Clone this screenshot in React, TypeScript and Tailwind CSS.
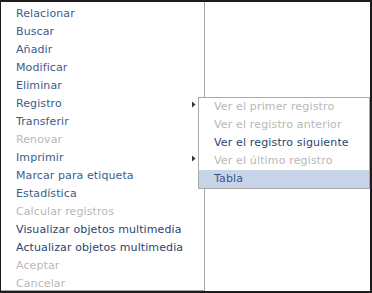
import React from "react";

type Item = { label: string; disabled?: boolean; dark?: boolean; sub?: boolean };

const mainItems: Item[] = [
  { label: "Relacionar" },
  { label: "Buscar" },
  { label: "Añadir" },
  { label: "Modificar" },
  { label: "Eliminar" },
  { label: "Registro", sub: true },
  { label: "Transferir" },
  { label: "Renovar", disabled: true },
  { label: "Imprimir", sub: true },
  { label: "Marcar para etiqueta" },
  { label: "Estadística" },
  { label: "Calcular registros", disabled: true },
  { label: "Visualizar objetos multimedia", dark: true },
  { label: "Actualizar objetos multimedia", dark: true },
  { label: "Aceptar", disabled: true },
  { label: "Cancelar", disabled: true },
];

const subItems: (Item & { active?: boolean })[] = [
  { label: "Ver el primer registro", disabled: true },
  { label: "Ver el registro anterior", disabled: true },
  { label: "Ver el registro siguiente", dark: true },
  { label: "Ver el último registro", disabled: true },
  { label: "Tabla", active: true },
];

const color = (it: Item) =>
  it.disabled ? "text-[#b8b8b8]" : it.dark ? "text-[#2a446f]" : "text-[#3d5b8b]";

const Arrow = () => (
  <svg width="4" height="7" viewBox="0 0 4 7" className="absolute right-[8px] top-[6px]">
    <path d="M0 0.5 L3.5 3.5 L0 6.5 Z" fill="#333" />
  </svg>
);

export default function App() {
  return (
    <div
      className="relative w-[372px] h-[293px] bg-white border-t-2 border-l border-r-2 border-b-2 border-[#1c1c1c] overflow-hidden"
      style={{ fontFamily: '"DejaVu Sans", Verdana, sans-serif' }}
    >
      <div className="w-[204px] h-full border-r border-b border-[#a9a9a9] pt-[3px] overflow-hidden">
        {mainItems.map((it) => (
          <div key={it.label} className={`relative h-[18px] leading-[18px] pl-[15px] text-[11px] tracking-[0.1px] whitespace-nowrap ${color(it)}`}>
            {it.label}
            {it.sub && <Arrow />}
          </div>
        ))}
      </div>

      <div className="absolute left-[197px] top-[95px] w-[172px] bg-white border border-[#a9a9a9]">
        {subItems.map((it) => (
          <div
            key={it.label}
            className={`h-[18px] leading-[18px] pl-[15px] text-[11px] tracking-[0.15px] whitespace-nowrap ${
              it.active ? "bg-[#c7d4e7] text-[#34548c]" : color(it)
            }`}
          >
            {it.label}
          </div>
        ))}
      </div>
    </div>
  );
}
